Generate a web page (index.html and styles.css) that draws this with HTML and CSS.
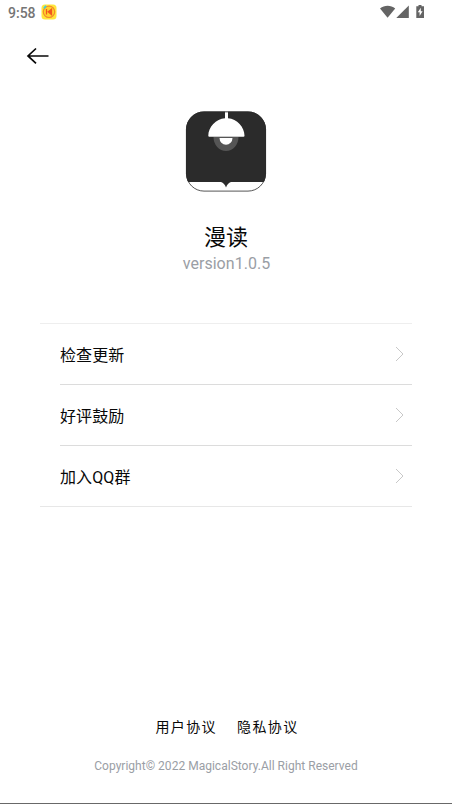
FILE: index.html
```html
<!DOCTYPE html>
<html lang="zh-CN">
<head>
<meta charset="utf-8">
<meta name="viewport" content="width=device-width, initial-scale=1">
<title>漫读</title>
<link rel="stylesheet" href="styles.css">
</head>
<body>
<div class="screen">
  <header class="status">
    <span class="time">9:58</span>
    <svg class="app-badge" width="16" height="16" viewBox="0 0 16 16">
      <rect x=".5" y=".5" width="15" height="15" rx="3.5" fill="#ffe63c"/>
      <circle cx="8" cy="7.8" r="5.7" fill="#ffd42c" stroke="#f58a2b" stroke-width="1.2"/>
      <path d="M5.5 5v5.6M10.5 5.2 7.2 7.8l3.3 2.8z" fill="#f1581f" stroke="#f1581f" stroke-width="1.3"/>
      <path d="M3 4.4l2-2.6" stroke="#3fd0d8" stroke-width="1.8"/>
    </svg>
    <svg class="signals" width="46" height="16" viewBox="0 0 46 16" fill="#646464">
      <path d="M0 4.5C4.4 .8 10.8.8 15.2 4.5L7.6 13.8z"/>
      <path d="M16.5 14V13.8L28.8 1.6V14z"/>
      <path d="M38.5 1h3v1.2H44V14h-7.7V2.2h2.2z"/>
      <path d="M40.8 3.8 37.8 8.3h1.8v3.6l3-4.6h-1.8z" fill="#fff"/>
    </svg>
  </header>
  <nav class="toolbar">
    <svg width="24" height="18" viewBox="0 0 24 18" fill="none" stroke="#080808" stroke-width="1.7">
      <path d="M2 9h20.5M10 1.5 2 9l8 7.3"/>
    </svg>
  </nav>
  <section class="identity">
    <svg class="logo" width="82" height="82" viewBox="0 0 82 82">
      <defs><clipPath id="tile"><rect x="1" y=".5" width="80" height="80" rx="18"/></clipPath></defs>
      <g clip-path="url(#tile)">
        <rect width="82" height="82" fill="#fff"/>
        <path d="M0 0H82V71H46Q42.5 72 41 76.5 39.5 72 36 71H0z" fill="#2b2b2b"/>
        <path d="M28.5 26a12.5 14 0 0 0 25 0z" fill="#555"/>
        <path d="M34.5 27a6.5 6.7 0 0 0 13 0z" fill="#fff"/>
        <path d="M40 0h3v7.2C52 7.8 59.5 15.8 59.5 24.8q0 1-1 1H24.3q-1 0-1-1C23.3 15.8 31 7.8 40 7.2z" fill="#fff"/>
      </g>
      <rect x="1.4" y=".9" width="79.2" height="79.2" rx="17.6" fill="none" stroke="#2b2b2b" stroke-width=".8"/>
    </svg>
    <h1 class="name">漫读</h1>
    <p class="version">version1.0.5</p>
  </section>
  <main class="menu">
    <div class="row"><span>检查更新</span><svg class="chevron" viewBox="0 0 9 16"><path d="M1 1l7 7-7 7"/></svg></div>
    <div class="row"><span>好评鼓励</span><svg class="chevron" viewBox="0 0 9 16"><path d="M1 1l7 7-7 7"/></svg></div>
    <div class="row"><span>加入QQ群</span><svg class="chevron" viewBox="0 0 9 16"><path d="M1 1l7 7-7 7"/></svg></div>
  </main>
  <footer class="footer">
    <div class="links"><span>用户协议</span><span>隐私协议</span></div>
    <p class="copyright">Copyright© 2022 MagicalStory.All Right Reserved</p>
  </footer>
</div>
</body>
</html>
```
FILE: styles.css
```css
* { box-sizing: border-box; }
body { margin: 0; background: #fff; }
h1, p { margin: 0; font-weight: 400; }
svg { display: block; flex: none; }
.screen {
  display: flex;
  flex-direction: column;
  height: 804px;
  border-bottom: 1px solid #686868;
  overflow: hidden;
  color: #080808;
  font-family: Roboto, "Noto Sans CJK SC", sans-serif;
}
.status {
  display: flex;
  align-items: center;
  height: 24px;
  padding: 0 26px 0 8px;
}
.time { font-size: 14px; line-height: 24px; color: #757575; font-weight: 500; padding-top: 2px; }
.app-badge { margin-left: 5px; }
.signals { margin-left: auto; }
.toolbar { height: 64px; padding: 23px 0 0 26px; }
.identity {
  display: flex;
  flex-direction: column;
  align-items: center;
  height: 235px;
  padding-top: 23px;
}
.name { margin-top: 29px; font-size: 22px; line-height: 32px; }
.version { font-size: 16px; line-height: 20px; color: #9a9ea5; padding-left: 1px; letter-spacing: .03px; }
.menu {
  margin: 0 40px;
  border-top: 1px solid #eee;
  border-bottom: 1px solid #e7e7e7;
}
.row {
  display: flex;
  align-items: center;
  justify-content: space-between;
  height: 61px;
  margin-left: 20px;
  padding-right: 8px;
  font-size: 16px;
  letter-spacing: .1px;
  border-bottom: 1px solid #dcdcdc;
}
.row:last-child { height: 60px; border-bottom: 0; }
.chevron { width: 9px; height: 16px; fill: none; stroke: #c8c8c8; stroke-width: 1; }
.footer { margin-top: auto; height: 87px; text-align: center; }
.links {
  display: flex;
  justify-content: center;
  gap: 20px;
  padding-left: 2px;
  font-size: 14px;
  line-height: 22px;
  letter-spacing: 1.4px;
}
.copyright { margin-top: 20px; font-size: 12px; line-height: 16px; color: #9a9ea5; letter-spacing: .015px; }
```
